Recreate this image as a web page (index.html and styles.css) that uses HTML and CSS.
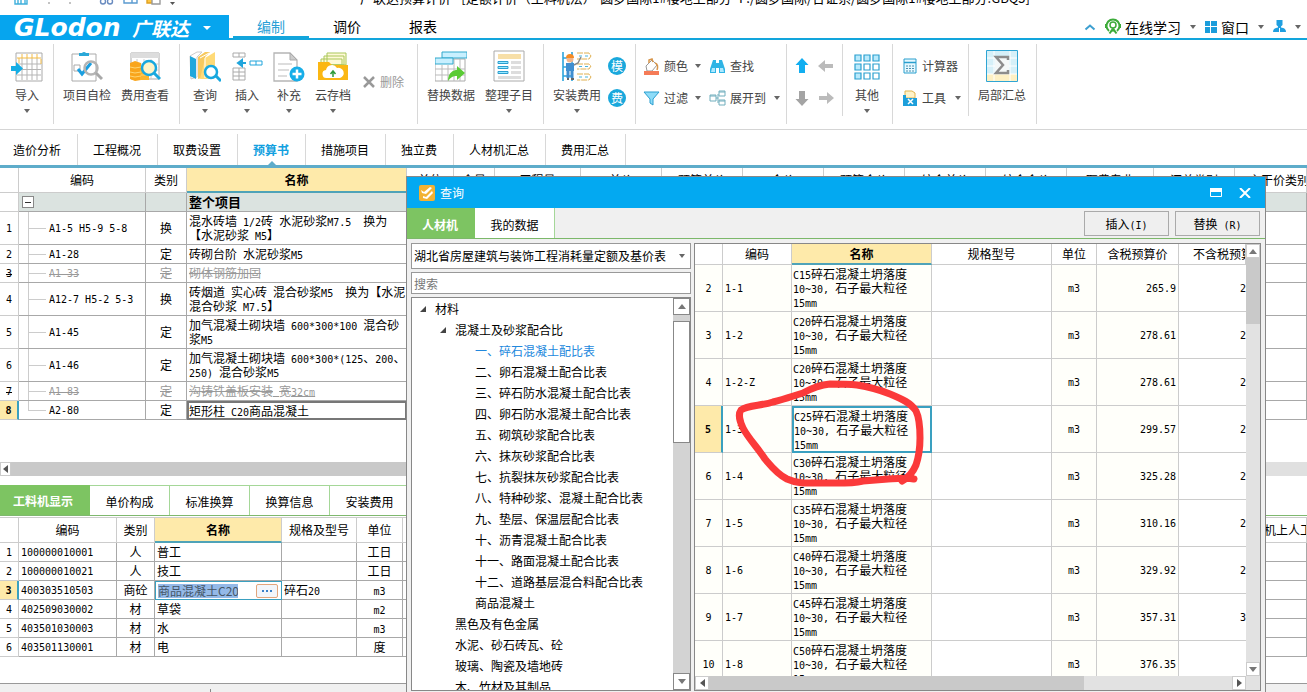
FILE: index.html
```html
<!DOCTYPE html>
<html lang="zh-CN">
<head>
<meta charset="utf-8">
<title>广联达预算计价</title>
<link rel="stylesheet" href="styles.css">
</head>
<body>
<header class="titlebar">
  <div class="titlebar-inner">
    <svg class="quick" width="180" height="16" viewBox="0 0 180 16" fill="none" stroke="#3fb0dc" stroke-width="1.4"><path d="M15 2h12v12H15zM18 14v-5h7v5M21 9v5"/><path d="M49 12v2M70 12v2" stroke="#aaa"/><circle cx="103" cy="11.500" r="2.500" stroke="#6a8cc0"/><circle cx="110" cy="11.500" r="2.500" stroke="#6a8cc0"/><path d="M124 6h8v7h-8zM129 9h8v4h-8" stroke="#5b9bd0"/><path d="M147 6h7v7h-7z" fill="#ffc640" stroke="#e0a020"/><path d="M152 9h8v5h-8z" fill="#fff" stroke="#999"/><path d="M170 12h5l-2.500 3z" fill="#555" stroke="none"/></svg>
    <span class="doc-title">广联达预算计价 - [定额计价（土料机法）-圆梦国际1#楼地上部分- F:/圆梦国际/合证系/圆梦国际1#楼地上部分.GBQ5]</span>
  </div>
</header>

<div class="menubar">
  <button class="logo"><span class="logo-en">GLodon</span><span class="logo-cn">广联达</span><i class="caret white"></i></button>
  <nav class="menus"><a href="#" class="on">编制</a><a href="#">调价</a><a href="#">报表</a></nav>
  <div class="menu-right">
    <button aria-label="收起"><svg width="12" height="8" viewBox="0 0 12 8"><path d="M1.500 6.500 6 2.500l4.500 4" fill="none" stroke="#3d9fd0" stroke-width="2"/></svg></button>
    <button class="m-learn"><svg width="16" height="17" viewBox="0 0 16 17" fill="none" stroke="#3dab3a" stroke-width="2"><path d="M4 13A6.500 6.500 0 1 1 12 13"/><circle cx="8" cy="7" r="3" stroke-width="1.500"/><path d="M8 10.500l-3.500 5M8 10.500l3.500 5M5.500 14l2.500-2 2.500 2"/><path d="M1 6v4M15 6v4"/></svg>在线学习</button>
    <i class="caret"></i>
    <button class="m-win"><svg width="12" height="12" viewBox="0 0 12 12" fill="#1b9ddb"><path d="M0 0h5v5H0zM6 0h6v5H6zM0 6h5v6H0zM6 6h6v6H6z"/></svg>窗口</button>
    <i class="caret"></i>
    <button class="m-user" aria-label="用户"><svg width="13" height="13" viewBox="0 0 13 13" fill="#1f9fe0"><path d="M3.500 0h6v5l-2 2h-2l-2-2z"/><path d="M0 12c0-3 2-4 5-4.500V6h3v1.500c3 .5 5 1.500 5 4.500z"/><path d="M6.500 8v4" stroke="#fff"/></svg></button>
    <i class="caret"></i>
  </div>
</div>

<div class="ribbon">
  <div class="group">
    <button class="big w42"><svg viewBox="0 0 32 32" fill="none"><path d="M5 3h26v28H5z" fill="#fff" stroke="#aaa"/><path d="M11 8v22M16 8v22M21 8v22M26 8v22M6 14h24M6 19.500h24M6 25h24" stroke="#b5b5b5"/><path d="M6 8h24M11 4v4M16 4v4M21 4v4M26 4v4M8 8v5M30 9v5" stroke="#f3bb45"/><path d="M0 16h5v-4l7 6.500-7 6.500v-4H0z" fill="#16aee5"/></svg><span>导入</span><i class="caret"></i></button>
  </div>
  <div class="group">
    <button class="big w58"><svg viewBox="0 0 32 32" fill="none"><path d="M1 4h24v27H1z" fill="#fff" stroke="#aaa"/><path d="M8 6V3h3a2.500 2.500 0 0 1 4 0h3v3z" fill="#2aa8d8"/><path d="M3 15h6v6H3z" stroke="#aaa"/><path d="M7 19l4 5 9-11" stroke="#1a9fe0" stroke-width="3"/><circle cx="20" cy="18" r="6.500" stroke="#b4b4b4" stroke-width="2.500"/><path d="M25 23l6 6" stroke="#a8a8a8" stroke-width="3"/></svg><span>项目自检</span></button>
    <button class="big w58"><svg viewBox="0 0 32 32" fill="none"><path d="M2 3h28v26H2z" fill="#fff" stroke="#aaa"/><path d="M2 3h28v5H2z" fill="#ddd"/><path d="M8 9v20M15 9v20M22 9v20M2 14h28M2 20h28" stroke="#ccc"/><path d="M1 13l5-2 6 2v17l-6 1-5-2z" fill="#f9a51c"/><path d="M11 20h9v10h-9z" fill="#fbb52d"/><path d="M1 17l5 1 6-1M1 22l5 1 6-1M1 26l5 1 6-1M12 25h8" stroke="#ffd572"/><circle cx="20" cy="18" r="7" fill="#fff4c8" stroke="#18a8df" stroke-width="2.500"/><path d="M25 23l6 6" stroke="#18a8df" stroke-width="3"/></svg><span>费用查看</span></button>
  </div>
  <div class="group">
    <button class="big w42"><svg viewBox="0 0 32 32" fill="none"><path d="M1 6l7-4h5L8 7v20l-6 2z" fill="#fff" stroke="#ccc"/><path d="M1 6l6 3v20l-6-3z" fill="#1fa7dc"/><path d="M9 7l7-5h5l-5 5v20l-7 2z" fill="#f7c95e"/><path d="M16 8l10-6v21l-8 6h-7z" fill="#ffda77"/><path d="M16 8v20M11 8l9-5" stroke="#fff"/><circle cx="22" cy="22" r="6" fill="#fff" stroke="#18a8df" stroke-width="2.500"/><path d="M27 26l5 5" stroke="#18a8df" stroke-width="3"/></svg><span>查询</span><i class="caret"></i></button>
    <button class="big w42"><svg viewBox="0 0 32 32" fill="none" stroke="#aaa"><path d="M2 3h12v4H2zM8 3v4M2 18h12v12H2zM8 18v12M2 22h12M2 26h12"/><path d="M19 11h12v4H19zM25 11v4" stroke="#20a5dc"/><path d="M15 13H8M11 10l-4 3 4 3z" fill="#20a5dc" stroke="#20a5dc" stroke-width="2"/></svg><span>插入</span><i class="caret"></i></button>
    <button class="big w42"><svg viewBox="0 0 32 32" fill="none"><path d="M1 3h16l7 7v21H1z" fill="#fff" stroke="#b5b5b5" stroke-width="1.300"/><path d="M17 3v7h7z" fill="#ccc" stroke="#aaa"/><path d="M5 14h14M5 20h11M5 26h9" stroke="#ddd" stroke-width="2"/><circle cx="24" cy="24" r="7.500" fill="#18aee8"/><path d="M24 19.500v9M19.500 24h9" stroke="#fff" stroke-width="2.500"/></svg><span>补充</span><i class="caret"></i></button>
    <button class="big w46"><svg viewBox="0 0 32 32" fill="none"><path d="M10 3h19v12H10zM7 6h20v9H7zM4 9h21v6H4z" fill="#fff9d8" stroke="#a9c75b"/><path d="M1 12h11l3 3h16v15H1z" fill="#fbb713"/><path d="M10 28a4 4 0 0 1-1-8 6 6 0 0 1 11-2 4.500 4.500 0 0 1 3 10z" fill="#fff"/><path d="M16 27v-5M13.500 24l2.500-3 2.500 3" stroke="#2f9c3a" stroke-width="1.500"/></svg><span>云存档</span><i class="caret"></i></button>
    <button class="small disabled"><svg width="14" height="14" viewBox="0 0 14 14"><path d="M2 2l10 10M12 2L2 12" stroke="#999" stroke-width="2.500"/></svg>删除</button>
  </div>
  <div class="group">
    <button class="big w58"><svg viewBox="0 0 32 32" fill="none"><path d="M0 9h30v22H0z" fill="#fff" stroke="#aaa"/><path d="M7 15v16M13 15v16M19 9v22M25 9v22M0 19h30M0 25h30" stroke="#bbb"/><path d="M7 2h25v6H7z" fill="#c8f0ff" stroke="#30a8cc"/><path d="M0 8h18v6H0z" fill="#c8f0ff" stroke="#30a8cc"/><path d="M13 31c0-9 6-11 9-11v-4l8 7-8 7v-4c-4 0-6 1-9 5z" fill="#5acb35"/></svg><span>替换数据</span></button>
    <button class="big w58"><svg viewBox="0 0 32 32" fill="none"><path d="M1 1h30v30H1z" fill="#fff" stroke="#aaa"/><path d="M5 4h23v5H5z" fill="#f7dfa8"/><path d="M18 11h10v3H18zM18 16h10v3H18zM18 21h10v3H18zM5 26h23v3H5z" fill="#ddd"/><path d="M5 11.500h10v2H5zM5 16.500h10v2H5zM5 21.500h10v2H5z" fill="#9beaff" stroke="#2c9fd0"/></svg><span>整理子目</span><i class="caret"></i></button>
  </div>
  <div class="group">
    <button class="big w58"><svg viewBox="0 0 32 32" fill="none"><path d="M2 2v29M11 2v29M2 8h10M2 17h10M2 26h10" stroke="#2ca4dc" stroke-width="1.600"/><path d="M16 3h12l2 3-2 3H16M16 14h12l2 2-2 3H16M16 24h12l2 3-2 3H16" stroke="#e0b050" stroke-dasharray="6 1"/><path d="M18 6h10M18 16.500h10M18 27h10" stroke="#49b4dc" stroke-dasharray="3 3"/><circle cx="9" cy="9" r="3.500" fill="#f1b58d"/><path d="M5 8a4 4 0 0 1 8 0z" fill="#f58b24"/><path d="M5 13h8v8H5z" fill="#408ed0"/><path d="M7 20v8M11 20v8" stroke="#408ed0" stroke-width="3"/><path d="M6 29h2M10 29h3" stroke="#666" stroke-width="2"/><path d="M13 15l4-2 3-6" stroke="#888" stroke-width="1.500"/></svg><span>安装费用</span><i class="caret"></i></button>
    <div class="rounds"><button class="round">模</button><button class="round">费</button></div>
  </div>
  <div class="group tools">
    <button class="small"><svg width="17" height="17" viewBox="0 0 17 17" fill="none"><path d="M3 8l6-6 5 5-5 6H4z" fill="#fff" stroke="#999"/><path d="M6 5V2l3-1 1 3M12 5c3 1 3 4 2 7" stroke="#d7954a" stroke-width="1.500"/><path d="M1 13h15v4H1z" fill="#f57b57"/></svg>颜色</button><i class="caret"></i>
    <button class="small"><svg width="17" height="17" viewBox="0 0 17 17"><path d="M4 2h3v3h3V2h3l3 9v4h-6v-5H7v5H1v-4z" fill="#2fb4e5"/><path d="M3 10h3v4H2zM11 10h3l1 4h-4z" fill="#aee9ff"/></svg>查找</button><i></i>
    <button class="small"><svg width="17" height="17" viewBox="0 0 17 17"><path d="M1 2h15l-6 7v6l-3-2V9z" fill="#8fdcf8" stroke="#2a9fd0"/></svg>过滤</button><i class="caret"></i>
    <button class="small"><svg width="17" height="17" viewBox="0 0 17 17" fill="#fff" stroke="#70aebd"><path d="M1 5h6v6H1zM10 1h6v5h-6zM10 10h6v5h-6zM7 8h2M9 4v9M1 6h6M10 2h6M10 11h6"/></svg>展开到</button><i class="caret"></i>
  </div>
  <div class="group short arrows">
    <button aria-label="上移"><svg viewBox="0 0 16 16" fill="#12aef0"><path d="M8 0l6.500 7H11v8H5V7H1.500z"/></svg></button>
    <button aria-label="左移"><svg viewBox="0 0 16 16" fill="#bbb"><path d="M0 8l7-6v4h8v4H7v4z"/></svg></button>
    <button aria-label="下移"><svg viewBox="0 0 16 16" fill="#a4a4a4"><path d="M8 16l6.500-7H11V1H5v8H1.500z"/></svg></button>
    <button aria-label="右移"><svg viewBox="0 0 16 16" fill="#bbb"><path d="M16 8L9 2v4H1v4h8v4z"/></svg></button>
  </div>
  <div class="group">
    <button class="big w40"><svg viewBox="0 0 32 32" fill="#fff" stroke="#2ba0cf" stroke-width="1.200"><path d="M4 5h6v6H4zM13 5h6v6h-6zM22 5h6v6h-6zM4 14h6v6H4zM4 23h6v6H4z" fill="#b9eafc"/><path d="M13 14h6v6h-6zM22 14h6v6h-6zM13 23h6v6h-6zM22 23h6v6h-6z"/></svg><span>其他</span><i class="caret"></i></button>
  </div>
  <div class="group short calc">
    <button class="small"><svg width="16" height="16" viewBox="0 0 16 16"><path d="M2 1h12v14H2z" fill="#e6f9ff" stroke="#2a9fce"/><path d="M2 4.500h12" stroke="#2a9fce" stroke-width="1.500"/><path d="M4 8h9M4 10.500h9M4 13h9" stroke="#4a8fb0" stroke-dasharray="2 1"/></svg>计算器</button>
    <button class="small"><svg width="16" height="16" viewBox="0 0 16 16"><path d="M3 1h7l3 2v5H3z" fill="#fff3c8" stroke="#e2b550"/><path d="M1 5h3v3h11v8H1z" fill="#1d9fdb"/><path d="M6 9l5 5M11 9l-5 5" stroke="#fff" stroke-width="1.500"/></svg>工具<i class="caret"></i></button>
  </div>
  <div class="group">
    <button class="big w58"><svg viewBox="0 0 32 32"><path d="M.5.500h31v31H.5z" fill="#d6f0f8" stroke="#2fa5d4"/><path d="M1 24h30v7H1z" fill="#fdf0c4"/><path d="M8 1v30M24 1v30M1 8h30M1 16h30M1 24h30" stroke="#fff"/><path d="M9 6h14v17H9z" fill="#f4f8f8"/><path d="M22 10V7H10l7 8-7 8h12v-3" fill="none" stroke="#8c8c8c" stroke-width="2.500"/></svg><span>局部汇总</span></button>
  </div>
</div>

<nav class="tabs">
  <a href="#">造价分析</a><a href="#">工程概况</a><a href="#">取费设置</a><a href="#" class="on">预算书</a><a href="#">措施项目</a><a href="#">独立费</a><a href="#">人材机汇总</a><a href="#">费用汇总</a>
</nav>

<main class="upper">
  <table class="grid budget">
    <colgroup><col class="c19"><col class="c127"><col class="c41"><col class="c220"><col class="c47"><col class="c41"><col class="c86"><col class="c81"><col class="c81"><col class="c81"><col class="c81"><col class="c81"><col class="c81"><col class="c87"><col class="c81"><col></colgroup>
    <thead><tr><th></th><th>编码</th><th>类别</th><th class="hot">名称</th><th>单位</th><th>含量</th><th>工程量</th><th>单价</th><th>预算单价</th><th>合价</th><th>预算合价</th><th>综合单价</th><th>综合合价</th><th>取费专业</th><th>汇总类别</th><th class="lead">主干价类别</th></tr></thead>
    <tbody>
      <tr class="sum"><td></td><td><button class="fold" aria-label="折叠"></button></td><td></td><td>整个项目</td><td colspan="12"></td></tr>
      <tr class="tall"><td>1</td><td class="node">A1-5 H5-9 5-8</td><td>换</td><td>混水砖墙<span class="m"> 1/2</span>砖<span class="m"> </span>水泥砂浆<span class="m">M7.5  </span>换为<br>【水泥砂浆<span class="m"> M5</span>】</td><td colspan="12"></td></tr>
      <tr><td>2</td><td class="node">A1-28</td><td>定</td><td>砖砌台阶<span class="m"> </span>水泥砂浆<span class="m">M5</span></td><td colspan="12"></td></tr>
      <tr class="off"><td>3</td><td class="node">A1-33</td><td>定</td><td>砌体钢筋加固</td><td colspan="12"></td></tr>
      <tr class="tall"><td>4</td><td class="node">A12-7 H5-2 5-3</td><td>换</td><td>砖烟道<span class="m"> </span>实心砖<span class="m"> </span>混合砂浆<span class="m">M5  </span>换为【水泥<br>混合砂浆<span class="m"> M7.5</span>】</td><td colspan="12"></td></tr>
      <tr class="tall"><td>5</td><td class="node">A1-45</td><td>定</td><td>加气混凝土砌块墙<span class="m"> 600*300*100 </span>混合砂<br>浆<span class="m">M5</span></td><td colspan="12"></td></tr>
      <tr class="tall"><td>6</td><td class="node">A1-46</td><td>定</td><td>加气混凝土砌块墙<span class="m"> 600*300*(125</span>、<span class="m">200</span>、<br><span class="m">250) </span>混合砂浆<span class="m">M5</span></td><td colspan="12"></td></tr>
      <tr class="off"><td>7</td><td class="node">A1-83</td><td>定</td><td>沟铸铁盖板安装<span class="m"> </span>宽<span class="m">32cm</span></td><td colspan="12"></td></tr>
      <tr class="cur"><td>8</td><td class="node last">A2-80</td><td>定</td><td class="box">矩形柱<span class="m"> C20</span>商品混凝土</td><td colspan="12"></td></tr>
    </tbody>
  </table>
</main>
<div class="hscroll"><button class="sb left" aria-label="向左"></button><span class="thumb"></span></div>

<section class="lower">
  <nav class="gtabs"><a href="#" class="on">工料机显示</a><a href="#">单价构成</a><a href="#">标准换算</a><a href="#">换算信息</a><a href="#">安装费用</a></nav>
  <table class="grid parts">
    <colgroup><col class="c19"><col class="c98"><col class="c38"><col class="c127"><col class="c75"><col class="c46"><col><col class="c46"></colgroup>
    <thead><tr><th></th><th>编码</th><th>类别</th><th class="hot">名称</th><th>规格及型号</th><th>单位</th><th></th><th class="edge">机上人工</th></tr></thead>
    <tbody>
      <tr><td>1</td><td>100000010001</td><td>人</td><td>普工</td><td></td><td>工日</td><td colspan="2"></td></tr>
      <tr><td>2</td><td>100000010021</td><td>人</td><td>技工</td><td></td><td>工日</td><td colspan="2"></td></tr>
      <tr class="cur"><td>3</td><td>400303510503</td><td>商砼</td><td class="edit"><div><input aria-label="名称" value="商品混凝土C20"><button aria-label="更多"><svg width="12" height="4" viewBox="0 0 12 4" fill="#3a80c8"><path d="M1 1h2v2H1zM5 1h2v2H5zM9 1h2v2H9z"/></svg></button></div></td><td>碎石<span class="m">20</span></td><td><span class="m">m3</span></td><td colspan="2"></td></tr>
      <tr><td>4</td><td>402509030002</td><td>材</td><td>草袋</td><td></td><td><span class="m">m2</span></td><td colspan="2"></td></tr>
      <tr><td>5</td><td>403501030003</td><td>材</td><td>水</td><td></td><td><span class="m">m3</span></td><td colspan="2"></td></tr>
      <tr><td>6</td><td>403501130001</td><td>材</td><td>电</td><td></td><td>度</td><td colspan="2"></td></tr>
    </tbody>
  </table>
</section>
<footer class="status"></footer>

<div class="dialog" role="dialog" aria-label="查询">
  <div class="dlg-title">
    <svg width="16" height="16" viewBox="0 0 16 16"><rect width="16" height="16" rx="2" fill="#f2b233"/><path d="M2 5l3 2 6-5 2 1-6 6-4-1zM4 11l3 1 6-6 1 2-6 6-4-1z" fill="#fff"/></svg>
    <span>查询</span>
    <button aria-label="最大化"><svg width="12" height="9" viewBox="0 0 12 9"><path d="M.5.500h11v8H.5z" fill="none" stroke="#fff"/><path d="M0 0h12v4H0z" fill="#fff"/></svg></button>
    <button aria-label="关闭"><svg width="12" height="10" viewBox="0 0 12 10"><path d="M1 0l10 10M11 0L1 10" stroke="#fff" stroke-width="2"/></svg></button>
  </div>
  <div class="dlg-tabs">
    <a href="#" class="on">人材机</a><a href="#">我的数据</a>
    <div class="dlg-actions"><button>插入<span class="m">(I)</span></button><button>替换<span class="m"> (R)</span></button></div>
  </div>
  <div class="dlg-body">
    <div class="side">
      <div class="pick"><select aria-label="定额库"><option>湖北省房屋建筑与装饰工程消耗量定额及基价表（2013）</option></select><i class="caret"></i></div>
      <input class="search" placeholder="搜索" aria-label="搜索">
      <div class="treebox">
        <ul class="tree">
          <li class="l1 open">材料</li>
          <li class="l2 open">混凝土及砂浆配合比</li>
          <li class="l3 sel">一、碎石混凝土配比表</li>
          <li class="l3">二、卵石混凝土配合比表</li>
          <li class="l3">三、碎石防水混凝土配合比表</li>
          <li class="l3">四、卵石防水混凝土配合比表</li>
          <li class="l3">五、砌筑砂浆配合比表</li>
          <li class="l3">六、抹灰砂浆配合比表</li>
          <li class="l3">七、抗裂抹灰砂浆配合比表</li>
          <li class="l3">八、特种砂浆、混凝土配合比表</li>
          <li class="l3">九、垫层、保温层配合比表</li>
          <li class="l3">十、沥青混凝土配合比表</li>
          <li class="l3">十一、路面混凝土配合比表</li>
          <li class="l3">十二、道路基层混合料配合比表</li>
          <li class="l3">商品混凝土</li>
          <li class="l2">黑色及有色金属</li>
          <li class="l2">水泥、砂石砖瓦、砼</li>
          <li class="l2">玻璃、陶瓷及墙地砖</li>
          <li class="l2">木、竹材及其制品</li>
        </ul>
        <div class="vs boxed"><button class="sb up" aria-label="向上"></button><span class="vthumb"></span><button class="sb down" aria-label="向下"></button></div>
      </div>
    </div>
    <div class="result">
      <div class="result-main">
        <table class="grid prices">
          <colgroup><col class="c28"><col class="c69"><col class="c140"><col><col class="c45"><col class="c82"><col class="c67"></colgroup>
          <thead><tr><th></th><th>编码</th><th class="hot">名称</th><th>规格型号</th><th>单位</th><th>含税预算价</th><th class="lead">不含税预算价</th></tr></thead>
          <tbody>
            <tr><td>2</td><td>1-1</td><td><span class="m">C15</span>碎石混凝土坍落度<br><span class="m">10~30, </span>石子最大粒径<br><span class="m">15mm</span></td><td></td><td>m3</td><td>265.9</td><td>2</td></tr>
            <tr><td>3</td><td>1-2</td><td><span class="m">C20</span>碎石混凝土坍落度<br><span class="m">10~30, </span>石子最大粒径<br><span class="m">15mm</span></td><td></td><td>m3</td><td>278.61</td><td>2</td></tr>
            <tr><td>4</td><td>1-2-Z</td><td><span class="m">C20</span>碎石混凝土坍落度<br><span class="m">10~30, </span>石子最大粒径<br><span class="m">15mm</span></td><td></td><td>m3</td><td>278.61</td><td>2</td></tr>
            <tr class="cur"><td>5</td><td>1-3</td><td class="pickd"><span class="m">C25</span>碎石混凝土坍落度<br><span class="m">10~30, </span>石子最大粒径<br><span class="m">15mm</span></td><td></td><td>m3</td><td>299.57</td><td>2</td></tr>
            <tr><td>6</td><td>1-4</td><td><span class="m">C30</span>碎石混凝土坍落度<br><span class="m">10~30, </span>石子最大粒径<br><span class="m">15mm</span></td><td></td><td>m3</td><td>325.28</td><td>2</td></tr>
            <tr><td>7</td><td>1-5</td><td><span class="m">C35</span>碎石混凝土坍落度<br><span class="m">10~30, </span>石子最大粒径<br><span class="m">15mm</span></td><td></td><td>m3</td><td>310.16</td><td>2</td></tr>
            <tr><td>8</td><td>1-6</td><td><span class="m">C40</span>碎石混凝土坍落度<br><span class="m">10~30, </span>石子最大粒径<br><span class="m">15mm</span></td><td></td><td>m3</td><td>329.92</td><td>2</td></tr>
            <tr><td>9</td><td>1-7</td><td><span class="m">C45</span>碎石混凝土坍落度<br><span class="m">10~30, </span>石子最大粒径<br><span class="m">15mm</span></td><td></td><td>m3</td><td>357.31</td><td>3</td></tr>
            <tr><td>10</td><td>1-8</td><td><span class="m">C50</span>碎石混凝土坍落度<br><span class="m">10~30, </span>石子最大粒径<br><span class="m">15mm</span></td><td></td><td>m3</td><td>376.35</td><td></td></tr>
          </tbody>
        </table>
        <div class="vs"><button class="sb up" aria-label="向上"></button><span class="vthumb"></span><button class="sb down" aria-label="向下"></button></div>
      </div>
      <div class="hs"><button class="sb left" aria-label="向左"></button><span class="thumb"></span><button class="sb right" aria-label="向右"></button></div>
    </div>
  </div>
  <svg class="mark" width="192" height="112" viewBox="735 378 192 112" fill="none" stroke="#fb3a3a" stroke-width="7" stroke-linecap="round" stroke-linejoin="round"><path d="M914 479C906 477 898 479 888 479L863 481C850 484 836 483 823 483C808 483 798 484 787 479C777 474 771 466 765 459C758 448 748 438 743 428C740 422 738 414 741 410C748 405 761 406 773 402C785 399 793 396 803 393C812 388 820 385 830 384C840 384 848 384 857 385C870 387 880 390 890 394C902 399 911 403 916 411C919 417 920 428 920 438C920 450 918 459 916 465C913 472 908 478 902 481"/></svg>
</div>
</body>
</html>
```
FILE: styles.css
```css
* { box-sizing: border-box; }
body {
  margin: 0; height: 100vh; overflow: hidden; position: relative;
  display: flex; flex-direction: column; background: #fff; color: #000;
  font: 12px/14px "Noto Sans CJK SC", "Liberation Sans", sans-serif;
}
button { border: 0; background: none; padding: 0; font: inherit; color: inherit; }
a { color: inherit; text-decoration: none; }
svg { display: block; flex: none; }
input, select { font: inherit; color: inherit; border-radius: 0; }
.m { font-family: "DejaVu Sans Mono", monospace; font-size: 10px; line-height: 8px; white-space: pre; }
.caret { flex: none; border: 3px solid transparent; border-top: 4px solid #666; border-bottom: 0; width: 6px; height: 4px; }
.caret.white { border-width: 4px 4px 0; border-top-color: #fff; width: 8px; }

.titlebar { height: 15px; flex: none; overflow: hidden; }
.titlebar-inner { display: flex; gap: 180px; margin-top: -10px; height: 16px; }
.doc-title { font-size: 13px; line-height: 16px; white-space: nowrap; }

.menubar { display: flex; flex: none; height: 25px; border-bottom: 2px solid #12a5dc; }
.logo { width: 229px; height: 25px; background: #06a5ee; color: #fff; display: flex; align-items: center; padding-left: 14px; flex: none; }
.logo-en { font: italic bold 25px/25px "DejaVu Sans", sans-serif; width: 118px; text-align: left; }
.logo-cn { font-size: 19px; line-height: 25px; font-style: italic; font-weight: bold; margin-right: 14px; }
.menus { display: flex; padding-left: 4px; font-size: 14px; line-height: 22px; }
.menus a { width: 76px; text-align: center; height: 23px; border-bottom: 2px solid transparent; }
.menus .on { color: #2a9fd6; border-color: #12a5dc; }
.menu-right { margin-left: auto; display: flex; align-items: center; gap: 9px; padding-right: 6px; font-size: 14px; line-height: 22px; }
.menu-right button { display: flex; align-items: center; gap: 4px; }

.ribbon { display: flex; flex: none; height: 90px; border-bottom: 1px solid #d5d5d5; padding-top: 4px; color: #444; align-items: flex-start; }
.group { display: flex; height: 80px; border-right: 1px solid #d8d8d8; padding: 0 5px 0 4px; }
.group:first-child { padding-left: 6px; }
.group.short { height: 72px; }
.big { display: flex; flex-direction: column; align-items: center; padding-top: 6px; }
.big svg { width: 32px; height: 32px; }
.big span { margin: 6px 0 7px; white-space: nowrap; }
.w40 { width: 40px; } .w42 { width: 42px; } .w46 { width: 46px; } .w58 { width: 58px; }
.small { display: flex; align-items: center; gap: 4px; white-space: nowrap; }
.disabled { color: #999; margin: 30px 8px 0 6px; height: 16px; }
.rounds { display: flex; flex-direction: column; gap: 14px; padding: 13px 4px 0 2px; }
.round { width: 18px; height: 18px; border-radius: 9px; background: #1aa8dc; color: #fff; font-size: 12px; line-height: 16px; }
.tools { display: grid; grid-template-columns: 52px 14px 65px 6px; grid-template-rows: 32px 32px; align-items: center; padding: 6px 6px 0 7px; width: 151px; }
.arrows { display: grid; grid-template-columns: 24px 24px; grid-template-rows: 32px 32px; place-items: center; padding: 6px 4px 0 3px; width: 56px; }
.arrows svg { width: 16px; height: 16px; }
.calc { flex-direction: column; padding: 6px 9px 0; width: 76px; }
.calc .small { height: 32px; }
.calc .caret { margin-left: 5px; }

.tabs { display: flex; flex: none; height: 38px; padding-top: 4px; border-bottom: 3px solid #5eacca; }
.tabs a { padding: 9px 16px 0 15px; height: 31px; border-right: 1px solid #d8d8d8; position: relative; }
.tabs a:first-child { padding-left: 13px; }
.tabs .on { color: #12a0e0; font-weight: bold; }
.tabs .on::after { content: ""; position: absolute; bottom: 0; left: 50%; margin-left: -4px; border: 4px solid transparent; border-top: 0; border-bottom-color: #5eacca; }

.grid { border-collapse: separate; border-spacing: 0; table-layout: fixed; width: 100%; }
.grid th, .grid td { padding: 0 2px; border-right: 1px solid #a8a8a8; border-bottom: 1px solid #a8a8a8; overflow: hidden; white-space: nowrap; text-align: center; }
.grid th { font-weight: normal; border-color: #ccc; }
.grid th.hot { background: #feeaaa; font-weight: bold; border-bottom: 2px solid #4fa3b8; }
.grid th.lead { text-align: left; padding-left: 14px; }
.grid td:nth-child(1), .grid td:nth-child(2) { font-family: "DejaVu Sans Mono", monospace; font-size: 10px; padding-top: 2px; }
.grid td:nth-child(2), .grid td:nth-child(4) { text-align: left; }
.grid td:first-child { border-color: #ccc; }
.grid .cur td:first-child { background: #feeaaa; font-weight: bold; border-right: 2px solid #3aa0c0; }
.c19 { width: 19px; } .c28 { width: 28px; } .c38 { width: 38px; } .c41 { width: 41px; } .c45 { width: 45px; }
.c46 { width: 46px; } .c47 { width: 47px; } .c67 { width: 67px; } .c69 { width: 69px; } .c75 { width: 75px; }
.c81 { width: 81px; } .c82 { width: 82px; } .c86 { width: 86px; } .c87 { width: 87px; } .c98 { width: 98px; }
.c127 { width: 127px; } .c140 { width: 140px; } .c220 { width: 220px; }

.upper { flex: 1; min-height: 0; overflow: hidden; }
.budget thead tr { height: 25px; }
.budget tbody tr { height: 19px; }
.budget tbody .tall { height: 33px; }
.budget .sum td { background: #dbe3e0; font-weight: bold; font-size: 13px; padding-top: 0; }
.budget .sum td:first-child { background: #fff; }
.fold { display: block; width: 12px; height: 12px; margin-left: 1px; border: 1px solid #888; background: linear-gradient(#333, #333) center / 6px 1px no-repeat #fff; }
.budget td.node { padding-left: 30px; background: linear-gradient(#ccc, #ccc) 9px 50% / 18px 1px no-repeat, linear-gradient(#ccc, #ccc) 9px 0 / 1px 100% no-repeat; }
.budget td.node.last { background-size: 18px 1px, 1px 50%; }
.budget .off td { color: #999; text-decoration: line-through; }
.budget .off td:first-child { color: #000; }
.budget td.box { border: 2px solid #777; padding: 0; }

.hscroll { display: flex; flex: none; height: 14px; background: #e0e0e0; margin-bottom: 9px; }
.hscroll .thumb { width: 60%; background: #c9c9c9; }
.sb { flex: none; width: 14px; height: 14px; background: #fff; border: 1px solid #ccc; display: flex; align-items: center; justify-content: center; }
.sb::after { content: ""; border: 5px solid transparent; }
.hscroll .sb { width: 11px; }
.sb.left::after { border-width: 4px 5px 4px 0; border-right-color: #555; }
.sb.right::after { border-width: 4px 0 4px 5px; border-left-color: #555; }
.sb.up::after { border-width: 0 4px 5px; border-bottom-color: #777; }
.sb.down::after { border-width: 5px 4px 0; border-top-color: #777; }

.lower { flex: none; height: 198px; }
.gtabs { display: flex; height: 31px; border-bottom: 1px solid #7fb86e; }
.gtabs a { width: 80px; text-align: center; line-height: 32px; border: 1px solid #a5d798; border-width: 1px 1px 0 0; }
.gtabs .on { width: 90px; background: #7dc462; color: #fff; font-weight: bold; border: 0; padding-right: 4px; }
.parts { margin-top: 1px; border-top: 1px solid #ccc; }
.parts thead tr { height: 25px; }
.parts tbody tr { height: 19px; }
.parts td:nth-child(4), .parts td:nth-child(5) { text-align: left; }
.parts th.edge { text-align: left; padding-left: 3px; }
.parts th:nth-child(7) { border-right: 0; }
.parts td.edit { border: 1px solid #3aa0c0; padding: 0 3px 0 2px; }
.edit div { display: flex; justify-content: space-between; align-items: center; }
.edit input { width: 80px; height: 14px; border: 0; padding: 0; background: #94b9e8; color: #456; }
.edit button { width: 22px; height: 14px; border: 1px solid #e2a57c; border-radius: 2px; background: #f2f5fa; display: flex; align-items: center; justify-content: center; }
.status { flex: none; height: 9px; background: linear-gradient(#888, #888) 210px 100% / 1px 3px no-repeat #f0f0f0; border-top: 1px solid #999; }

.dialog { position: absolute; left: 406px; right: 41px; top: 176px; bottom: 0; display: flex; flex-direction: column; background: #f0f0f0; border: 1px solid #888; border-bottom: 0; }
.dlg-title { display: flex; align-items: center; flex: none; height: 31px; background: #03a9f1; color: #fff; padding: 0 14px 0 12px; gap: 5px; }
.dlg-title span { flex: 1; }
.dlg-title button { margin-left: 12px; }
.dlg-tabs { display: flex; flex: none; height: 31px; border-bottom: 1px solid #7cb86a; }
.dlg-tabs a { width: 80px; text-align: center; line-height: 33px; background: #fff; border-right: 1px solid #a5d798; }
.dlg-tabs .on { width: 68px; background: #7dc462; color: #fff; font-weight: bold; border: 0; padding-right: 2px; }
.dlg-actions { display: flex; gap: 6px; margin-left: auto; padding: 3px 5px 2px 0; }
.dlg-actions button { width: 85px; border: 1px solid #aaa; background: #efefef; }
.dlg-body { flex: 1; display: flex; min-height: 0; padding: 4px 4px 1px; gap: 3px; }
.side { width: 280px; flex: none; display: flex; flex-direction: column; }
.pick { display: flex; align-items: center; gap: 8px; height: 26px; flex: none; border: 1px solid #999; background: #fff; padding-right: 5px; }
.pick select { appearance: none; flex: 1; min-width: 0; height: 22px; border: 0; background: none; padding: 0 0 0 2px; overflow: hidden; }
.search { height: 22px; flex: none; border: 1px solid #999; background: #fff; margin: 3px 0; padding: 0 2px; }
.search::placeholder { color: #777; opacity: 1; }
.treebox { flex: 1; min-height: 0; display: flex; border: 1px solid #888; background: #fff; overflow: hidden; }
.tree { flex: 1; list-style: none; margin: 0; padding: 0; overflow: hidden; line-height: 21px; }
.tree li { height: 21px; position: relative; white-space: nowrap; }
.l1 { padding-left: 23px; } .l2 { padding-left: 43px; } .l3 { padding-left: 63px; }
.tree .sel { color: #2288dd; }
.open::before { content: ""; position: absolute; top: 8px; margin-left: -15px; border: 3px solid #444; border-top-color: transparent; border-left-color: transparent; }
.vs { flex: none; width: 14px; display: flex; flex-direction: column; background: #e2e2e2; }
.vs .sb { width: 100%; }
.vs .vthumb { height: 66px; background: #c9c9c9; }
.vs .down { margin-top: auto; }
.vs.boxed { width: 17px; background: #d3d3d3; }
.vs.boxed .sb { height: 17px; border-color: #888; }
.vs.boxed .vthumb { height: 122px; margin-top: 6px; background: #fff; border: 1px solid #888; }
.result { flex: 1; min-width: 0; display: flex; flex-direction: column; border: 1px solid #888; background: #fff; }
.result-main { flex: 1; min-height: 0; display: flex; align-items: flex-start; overflow: hidden; }
.result-main .vs { align-self: stretch; }
.prices { flex: 1; width: 0; min-width: 0; }
.prices thead tr { height: 21px; }
.prices tbody tr { height: 47px; }
.prices th, .prices td { border-color: #ccc; }
.prices td { background: #fffffa; }
.prices td:nth-child(3) { text-align: left; padding-left: 1px; }
.prices td:nth-child(4), .prices td:nth-child(7) { background: #fff; }
.prices td:nth-child(n+5) { font-family: "DejaVu Sans Mono", monospace; font-size: 10px; padding-top: 2px; }
.prices td:nth-child(6) { text-align: right; }
.prices td:nth-child(7) { text-align: right; padding-right: 0; border-right: 0; }
.prices .cur td.pickd { border: 2px solid #3aa0c0; padding: 0; }
.hs { display: flex; flex: none; height: 14px; background: #e2e2e2; padding-right: 14px; }
.hs .thumb { width: 68%; background: #c9c9c9; }
.hs .right { margin-left: auto; }
.mark { position: absolute; left: 328px; top: 201px; pointer-events: none; }
```
